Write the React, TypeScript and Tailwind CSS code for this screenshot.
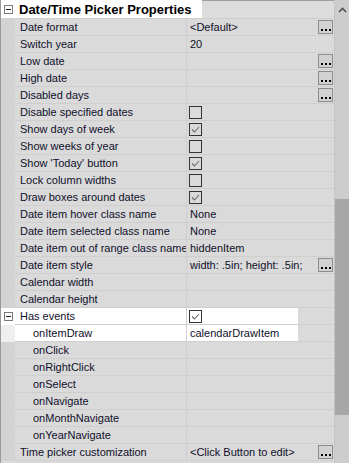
import React from "react";

type Row = {
  name: string;
  value?: string;
  check?: boolean | null;
  btn?: boolean;
  indent?: boolean;
  expander?: boolean;
  hl?: "head" | "sub";
};

const rows: Row[] = [
  { name: "Date format", value: "<Default>", btn: true },
  { name: "Switch year", value: "20" },
  { name: "Low date", btn: true },
  { name: "High date", btn: true },
  { name: "Disabled days", btn: true },
  { name: "Disable specified dates", check: false },
  { name: "Show days of week", check: true },
  { name: "Show weeks of year", check: false },
  { name: "Show 'Today' button", check: true },
  { name: "Lock column widths", check: false },
  { name: "Draw boxes around dates", check: true },
  { name: "Date item hover class name", value: "None" },
  { name: "Date item selected class name", value: "None" },
  { name: "Date item out of range class name", value: "hiddenItem" },
  { name: "Date item style", value: "width: .5in; height: .5in;", btn: true },
  { name: "Calendar width" },
  { name: "Calendar height" },
  { name: "Has events", check: true, expander: true, hl: "head" },
  { name: "onItemDraw", value: "calendarDrawItem", indent: true, hl: "sub" },
  { name: "onClick", indent: true },
  { name: "onRightClick", indent: true },
  { name: "onSelect", indent: true },
  { name: "onNavigate", indent: true },
  { name: "onMonthNavigate", indent: true },
  { name: "onYearNavigate", indent: true },
  { name: "Time picker customization", value: "<Click Button to edit>", btn: true },
];

function Minus() {
  return (
    <div className="w-[9px] h-[9px] border border-[#7a7a7a] bg-white flex items-center justify-center">
      <div className="w-[5px] h-px bg-[#222]" />
    </div>
  );
}

function Check({ on }: { on: boolean }) {
  return (
    <div className="w-[13px] h-[13px] border border-[#333] bg-transparent flex items-center justify-center">
      {on && (
        <svg width="11" height="11" viewBox="0 0 11 11">
          <path d="M2 5.5 L4.5 8 L9 3" fill="none" stroke="#6a6a6a" strokeWidth="1.1" />
        </svg>
      )}
    </div>
  );
}

function Dots() {
  return (
    <div className="w-[15px] h-[14px] border border-[#8c8c8c] bg-[#d2d2d2] flex items-end justify-center pb-[2px] gap-[2px]">
      <div className="w-[2px] h-[2px] bg-black" />
      <div className="w-[2px] h-[2px] bg-black" />
      <div className="w-[2px] h-[2px] bg-black" />
    </div>
  );
}

export default function App() {
  return (
    <div
      className="w-[349px] h-[463px] flex bg-[#dadada] overflow-hidden text-[#10102a]"
      style={{ fontFamily: '"Liberation Sans", Arial, sans-serif' }}
    >
      <div className="flex-1 flex flex-col border-l border-[#9a9a9a]">
        {/* header */}
        <div className="flex h-[19px] border-b border-[#cdcdcd]">
          <div className="w-[14px] bg-white flex items-center justify-center pl-[1px]">
            <Minus />
          </div>
          <div className="w-[187px] bg-white flex items-center pl-[4px] text-[13px] font-bold text-black leading-none">
            Date/Time Picker Properties
          </div>
          <div className="flex-1 bg-[#dcdcdc] border-t border-[#a0a0a0]" />
        </div>
        {rows.map((r, i) => {
          const margin =
            r.hl === "head" ? "bg-white" : r.hl === "sub" ? "bg-[#efefef]" : "bg-[#d3d3d3]";
          const cellBg = r.hl ? "bg-white" : "bg-[#dadada]";
          return (
            <div key={i} className="flex h-[17px]">
              <div className={`w-[14px] ${margin} flex items-center justify-center pl-[1px]`}>
                {r.expander && <Minus />}
              </div>
              <div
                className={`w-[172px] ${cellBg} border-b border-r border-[#cfcfcf] flex items-center text-[11px] leading-none whitespace-nowrap overflow-hidden ${
                  r.indent ? "pl-[18px]" : "pl-[5px]"
                }`}
              >
                {r.name}
              </div>
              <div className="flex-1 flex border-b border-[#cfcfcf] bg-[#dadada]">
                <div
                  className={`flex-1 flex items-center pl-[2px] pr-[1px] text-[11px] leading-none whitespace-nowrap ${
                    r.hl ? "bg-white max-w-[111px]" : ""
                  }`}
                >
                  {r.check !== undefined && r.check !== null ? (
                    <Check on={!!r.check} />
                  ) : (
                    <span className="pl-[1px]">{r.value}</span>
                  )}
                </div>
                {r.btn && (
                  <div className="ml-auto flex items-center pr-[1px]">
                    <Dots />
                  </div>
                )}
              </div>
            </div>
          );
        })}
      </div>
      {/* scrollbar */}
      <div className="w-[15px] flex flex-col bg-[#cdcdcd] border-l border-[#c4c4c4]">
        <div className="h-[19px] flex items-center justify-center">
          <svg width="9" height="6" viewBox="0 0 9 6">
            <path d="M1 5 L4.5 1.5 L8 5" fill="none" stroke="#505050" strokeWidth="1.6" />
          </svg>
        </div>
        <div className="h-[180px]" />
        <div className="h-[216px] bg-[#a6a6a6]" />
      </div>
    </div>
  );
}
